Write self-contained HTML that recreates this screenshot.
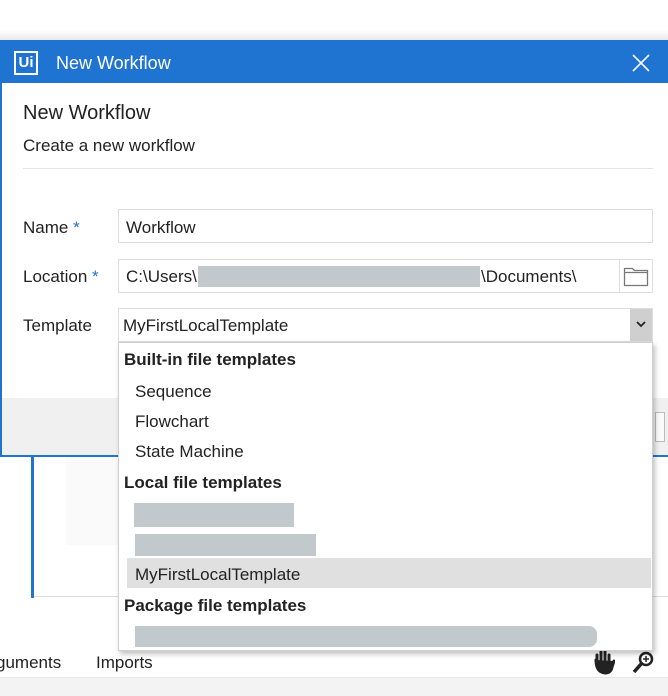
<!DOCTYPE html>
<html><head><style>
*{box-sizing:border-box;margin:0;padding:0}
body{width:668px;height:696px;overflow:hidden;background:#fff;font-family:"Liberation Sans",sans-serif;color:#222;position:relative}
.a{position:absolute}
.t{font-size:17px;white-space:nowrap}
.red{background:#c1c9cd;position:absolute}
</style></head><body>
<div class="a" style="left:0;top:30px;width:668px;height:12px;background:linear-gradient(#fff,#e4e4e4)"></div>
<!-- dialog -->
<div class="a" style="left:0;top:40px;width:668px;height:417px;border:2px solid #1f74d2;border-right:none;background:#fff"></div>
<div class="a" style="left:0;top:41px;width:668px;height:42px;background:#1f74d2"></div>
<div class="a" style="left:14px;top:51px;width:24px;height:24px;border:2px solid #fff;color:#fff;font-size:15px;font-weight:bold;text-align:center;line-height:20px">Ui</div>
<div class="a t" style="left:56px;top:53px;color:#fff;font-size:18px">New Workflow</div>
<svg class="a" style="left:631px;top:53px" width="20" height="20"><path d="M2 2L18 18M18 2L2 18" stroke="#fff" stroke-width="1.6"/></svg>
<div class="a t" style="left:23px;top:102px;font-size:20px;color:#222">New Workflow</div>
<div class="a t" style="left:23px;top:136px">Create a new workflow</div>
<div class="a" style="left:23px;top:168px;width:630px;height:1px;background:#e4e4e4"></div>
<div class="a" style="left:2px;top:398px;width:666px;height:57px;background:#f0f0f0"></div>
<div class="a" style="left:655px;top:412px;width:10px;height:30px;border:1px solid #bbb;background:#fafafa"></div>
<div class="a t" style="left:23px;top:218px">Name <span style="color:#1f74d2">*</span></div>
<div class="a t" style="left:23px;top:267px">Location <span style="color:#1f74d2">*</span></div>
<div class="a t" style="left:23px;top:316px">Template</div>
<div class="a" style="left:118px;top:209px;width:535px;height:34px;border:1px solid #ddd"></div>
<div class="a t" style="left:126px;top:218px">Workflow</div>
<div class="a" style="left:118px;top:259px;width:535px;height:34px;border:1px solid #ddd"></div>
<div class="a" style="left:619px;top:259px;width:1px;height:34px;background:#ddd"></div>
<svg class="a" style="left:623px;top:265px" width="26" height="22"><path d="M1.5 3.5h8l2 2h13v15h-23z" fill="none" stroke="#777" stroke-width="1.3"/><path d="M1.5 7.5h23" stroke="#777" stroke-width="1.3"/></svg>
<div class="a t" style="left:126px;top:267px">C:\Users\</div>
<div class="red" style="left:198px;top:266px;width:282px;height:21px"></div>
<div class="a t" style="left:481px;top:267px">\Documents\</div>
<div class="a" style="left:118px;top:308px;width:535px;height:34px;border:1px solid #ddd"></div>
<div class="a" style="left:630px;top:309px;width:22px;height:32px;background:#cfcfcf"></div>
<svg class="a" style="left:636px;top:320px" width="10" height="8"><path d="M1 2l4 4 4-4" fill="none" stroke="#222" stroke-width="1.8"/></svg>
<div class="a t" style="left:123px;top:316px">MyFirstLocalTemplate</div>
<!-- below -->
<div class="a" style="left:31px;top:457px;width:3px;height:141px;background:#1f74d2"></div>
<div class="a" style="left:66px;top:457px;width:60px;height:88px;background:#fafafa"></div>
<div class="a" style="left:34px;top:596px;width:634px;height:1px;background:#ddd"></div>
<div class="a t" style="left:-4px;top:653px">guments</div>
<div class="a t" style="left:96px;top:653px">Imports</div>
<div class="a" style="left:0;top:677px;width:668px;height:19px;background:#f3f3f3;border-top:1px solid #e6e6e6"></div>
<svg class="a" style="left:593px;top:651px" width="22" height="24"><path d="M4 10v-6M8 9v-8M12 9v-8M16 10v-6M3 9q0 12 9 13q6 0 7-6l2-6" stroke="#222" stroke-width="3" fill="#222" stroke-linecap="round"/></svg>
<svg class="a" style="left:631px;top:651px" width="24" height="24"><circle cx="15" cy="8" r="6" fill="none" stroke="#222" stroke-width="2.5"/><path d="M11 12L3 21" stroke="#222" stroke-width="3.5"/><path d="M15 5v6M12 8h6" stroke="#222" stroke-width="1.5"/></svg>
<!-- dropdown -->
<div class="a" style="left:118px;top:342px;width:535px;height:309px;background:#fff;border:1px solid #d0d0d0;box-shadow:2px 3px 5px rgba(0,0,0,.25)"></div>
<div class="a t" style="left:124px;top:350px;font-weight:bold">Built-in file templates</div>
<div class="a t" style="left:135px;top:382px">Sequence</div>
<div class="a t" style="left:135px;top:412px">Flowchart</div>
<div class="a t" style="left:135px;top:442px">State Machine</div>
<div class="a t" style="left:124px;top:473px;font-weight:bold">Local file templates</div>
<div class="red" style="left:134px;top:503px;width:160px;height:24px"></div>
<div class="red" style="left:135px;top:534px;width:181px;height:22px"></div>
<div class="a" style="left:127px;top:558px;width:524px;height:30px;background:#e0e0e0"></div>
<div class="a t" style="left:135px;top:565px">MyFirstLocalTemplate</div>
<div class="a t" style="left:124px;top:596px;font-weight:bold">Package file templates</div>
<div class="red" style="left:135px;top:626px;width:462px;height:21px;border-radius:0 8px 8px 0"></div>
</body></html>
